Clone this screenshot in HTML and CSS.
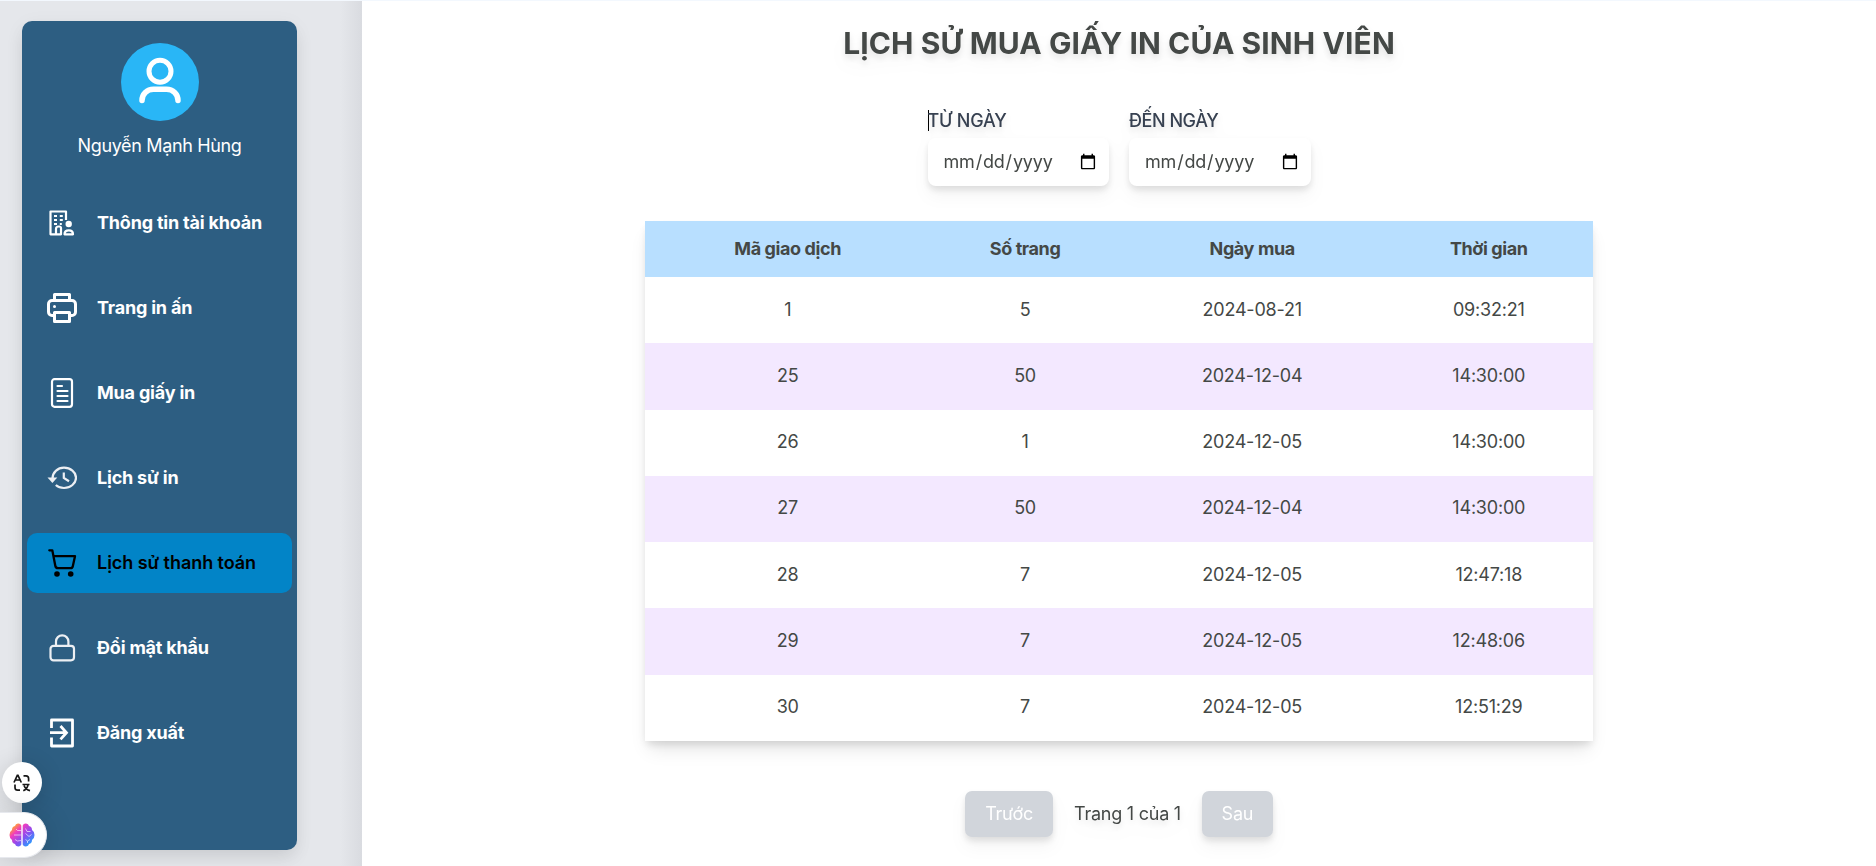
FILE: index.html
```html
<!DOCTYPE html>
<html lang="en">
<head>
<meta charset="utf-8">
<title>Lịch sử mua giấy in</title>
<link rel="stylesheet" href="styles.css">
</head>
<body>
<div class="page">
  <aside class="side">
    <div class="panel">
      <svg class="avatar" viewBox="0 0 78 78" fill="none">
        <circle cx="39" cy="39" r="39" fill="#29b6f6"/>
        <circle cx="39" cy="28.300" r="11" stroke="#fff" stroke-width="5"/>
        <path d="M21 57.500C21 51 26 46.300 32.500 46.300H45.500C52 46.300 57 51 57 57.500" stroke="#fff" stroke-width="5.500" stroke-linecap="round"/>
      </svg>
      <p class="name">Nguyễn Mạnh Hùng</p>
      <nav class="menu">
        <a class="item">
          <svg class="icon" viewBox="0 0 30 30" fill="none" stroke="#fff" stroke-width="2.200" stroke-linejoin="round">
            <path d="M14 26.300H3.500V3.500H19V12M11 26.300H14V20a1.500 1.500 0 0 0-1.500-1.500h-1A2.500 2.500 0 0 0 9 21v5.300"/>
            <path d="M7 8h3M12.800 8h3M7 12h3M12.800 12h3M7 16h3M12.800 16h2"/>
            <circle cx="21.700" cy="16" r="3.200" fill="#fff" stroke="none"/>
            <path d="M17.500 26.300h8.500c0-2.800-1.500-4-4.200-4s-4.300 1.200-4.300 4z"/>
          </svg>
          <span>Thông tin tài khoản</span>
        </a>
        <a class="item">
          <svg class="icon" viewBox="0 0 30 30" fill="none" stroke="#fff" stroke-width="3" stroke-linejoin="round">
            <path d="M7.500 7V1.500H22.500V7M7.500 22.500H5a3.500 3.500 0 0 1-3.500-3.500V11A3.500 3.500 0 0 1 5 7.500H25a3.500 3.500 0 0 1 3.500 3.500V19a3.500 3.500 0 0 1-3.500 3.500H22.500"/>
            <path d="M7.500 19.500H22.500V28.500H7.500z"/>
            <circle cx="7.500" cy="13.500" r="1.500" fill="#fff" stroke="none"/>
          </svg>
          <span>Trang in ấn</span>
        </a>
        <a class="item">
          <svg class="icon" viewBox="0 0 30 30" fill="none" stroke="#fff" stroke-width="2.200" stroke-linecap="round">
            <rect x="5" y="1.200" width="20" height="27.600" rx="2.500"/>
            <path d="M10.500 8H15M10.500 13H20.500M10.500 18H20.500M10.500 23H20.500"/>
          </svg>
          <span>Mua giấy in</span>
        </a>
        <a class="item">
          <svg class="icon" viewBox="0 0 30 30" fill="none" stroke="#eceff3" stroke-width="2.200">
            <path d="M5.500 15.500C5.500 9.500 10.500 4.700 17 4.700S29 9.200 29 14.800 23.500 25 17 25c-3.300 0-6.200-1.100-8.200-3"/>
            <path d="M.5 14.600H10.300L5.400 20z" fill="#eceff3" stroke="none"/>
            <path d="M16.800 9.500V15L22 18.300"/>
          </svg>
          <span>Lịch sử in</span>
        </a>
        <a class="item active">
          <svg class="icon" viewBox="0 0 30 30" fill="none" stroke="#000" stroke-width="2.300" stroke-linecap="round" stroke-linejoin="round">
            <path d="M2.300 2.300H5.300L8.300 17.800Q8.700 20.200 11 20.200H23.500Q25.400 20.200 25.800 18.200L28 8.200H6.600"/>
            <circle cx="10" cy="26" r="2.800" fill="#000" stroke="none"/>
            <circle cx="23.700" cy="26" r="2.800" fill="#000" stroke="none"/>
          </svg>
          <span>Lịch sử thanh toán</span>
        </a>
        <a class="item">
          <svg class="icon" viewBox="0 0 30 30" fill="none" stroke="#eceff3" stroke-width="2.200">
            <rect x="3.500" y="12.800" width="23.500" height="14.500" rx="3"/>
            <path d="M9 12.800V8.500A6.200 6.200 0 0 1 21.400 8.500V12.800"/>
          </svg>
          <span>Đổi mật khẩu</span>
        </a>
        <a class="item">
          <svg class="icon" viewBox="0 0 30 30" fill="none" stroke="#fff" stroke-width="2.800">
            <path d="M4.500 10V2H25.500V28H4.500V19.500" stroke-linejoin="round"/>
            <path d="M3 14.700H19.500M13.500 8L19.500 14.700L13.500 21.400"/>
          </svg>
          <span>Đăng xuất</span>
        </a>
      </nav>
    </div>
  </aside>
  <main class="main">
    <h1 class="title">LỊCH SỬ MUA GIẤY IN CỦA SINH VIÊN</h1>
    <div class="filters">
      <div class="field">
        <label class="label caret" for="from">TỪ NGÀY</label>
        <input class="date" id="from" type="date">
      </div>
      <div class="field">
        <label class="label" for="to">ĐẾN NGÀY</label>
        <input class="date" id="to" type="date">
      </div>
    </div>
    <table class="table">
      <colgroup><col class="c1"><col class="c2"><col class="c3"><col class="c4"></colgroup>
      <thead><tr><th>Mã giao dịch</th><th>Số trang</th><th>Ngày mua</th><th>Thời gian</th></tr></thead>
      <tbody>
        <tr><td>1</td><td>5</td><td>2024-08-21</td><td>09:32:21</td></tr>
        <tr><td>25</td><td>50</td><td>2024-12-04</td><td>14:30:00</td></tr>
        <tr><td>26</td><td>1</td><td>2024-12-05</td><td>14:30:00</td></tr>
        <tr><td>27</td><td>50</td><td>2024-12-04</td><td>14:30:00</td></tr>
        <tr><td>28</td><td>7</td><td>2024-12-05</td><td>12:47:18</td></tr>
        <tr><td>29</td><td>7</td><td>2024-12-05</td><td>12:48:06</td></tr>
        <tr><td>30</td><td>7</td><td>2024-12-05</td><td>12:51:29</td></tr>
      </tbody>
    </table>
    <div class="pager">
      <button class="btn prev" disabled>Trước</button>
      <span class="count">Trang 1 của 1</span>
      <button class="btn next" disabled>Sau</button>
    </div>
  </main>
</div>
<div class="float translate">
  <svg width="18" height="18" viewBox="0 0 18 18" fill="none" stroke="#161616" stroke-width="1.700">
    <path d="M1 8.500L4.300 1.300H5L8.300 8.500M2.500 6H7"/>
    <path d="M10.500 1.800H13Q15.600 1.800 15.600 4.500V7.500"/>
    <path d="M2 10.500V13.500Q2 16.200 4.700 16.200H7"/>
    <path d="M9.500 10.500H16.500M10.300 16.700C13 15.500 14.500 13.500 15 10.800M11 11.500C12 14 14 16 17 16.700"/>
  </svg>
</div>
<div class="float assistant">
  <svg width="26" height="24" viewBox="0 0 26 24">
    <defs><linearGradient id="g" x1="0" y1="0" x2="1" y2="1">
      <stop offset="0" stop-color="#ffa52c"/><stop offset=".15" stop-color="#ff9a3c"/><stop offset=".32" stop-color="#f03cc0"/><stop offset=".58" stop-color="#8a4df0"/><stop offset=".9" stop-color="#20a5ff"/>
    </linearGradient></defs>
    <path fill="url(#g)" d="M12.300 2.500Q11.500.3 9 .5 6.500.8 6 3 3 3.500 3 7 .5 8.500.5 12T3 17Q3 20.500 6 21 6.500 23.300 9 23.500 11.500 23.700 12.300 21.500zM13.700 2.500Q14.500.3 17 .5 19.500.8 20 3 23 3.500 23 7 25.500 8.500 25.500 12T23 17Q23 20.500 20 21 19.500 23.300 17 23.500 14.500 23.700 13.700 21.500z"/>
    <path stroke="#fff" stroke-opacity=".6" fill="none" stroke-width="1" d="M12.300 7.500H8.500L7 6M5 12H12.300M6 16.500Q8 19 12 17.500M16.500 5.500L18 8.500H21.500M16.500 10.500L20 13.500L22.500 11.500M16.500 16.500L18.500 18L21 16.500M18.500 18V20"/>
  </svg>
</div>
</body>
</html>
```
FILE: styles.css
```css
* { box-sizing: border-box; margin: 0; }
body {
  height: 866px;
  overflow: hidden;
  background: #fff;
  border-top: 1px solid #f3f8fe;
  color: #444846;
  font: 18px/27px Inter, "Noto Sans", sans-serif;
}
.page { display: flex; height: 865px; }

.side {
  flex: none;
  width: 362px;
  padding: 20px 65px 15px 22px;
  background: linear-gradient(90deg, #e5e7eb 94%, #d9dbe0);
}
.panel {
  height: 829px;
  padding: 22px 5px 0;
  border-radius: 10px;
  background: #2d5e82;
  box-shadow: 0 10px 18px -2px rgba(0, 0, 0, .08), 0 4px 20px rgba(0, 0, 0, .05);
  display: flex;
  flex-direction: column;
  align-items: center;
  color: #fff;
}
.avatar { width: 78px; height: 78px; flex: none; }
.name { margin-top: 11px; letter-spacing: -.35px; }
.menu { width: 100%; margin-top: 34px; display: flex; flex-direction: column; gap: 25px; }
.item {
  height: 60px;
  padding-left: 20px;
  display: flex;
  align-items: center;
  gap: 20px;
  border-radius: 10px;
  font-weight: 700;
  letter-spacing: -.2px;
}
.item span { padding-bottom: 2px; }
.item.active { background: #0284c7; color: #000; font-weight: 600; letter-spacing: -.05px; }
.icon { width: 30px; height: 30px; flex: none; }

.main {
  flex: 1;
  padding-top: 22px;
  display: flex;
  flex-direction: column;
  align-items: center;
}
.title, .filters, .pager {
  filter: drop-shadow(0 10px 8px rgba(0, 0, 0, .04)) drop-shadow(0 4px 3px rgba(0, 0, 0, .1));
}
.title { font-size: 30px; line-height: 40px; font-weight: 700; letter-spacing: .1px; white-space: nowrap; }
.filters { margin-top: 44px; display: flex; gap: 20px; }
.field { display: flex; flex-direction: column; gap: 4px; }
.label { color: #374151; line-height: 27px; font-weight: 500; letter-spacing: -.45px; }
.caret { letter-spacing: -.2px; }
.caret::before {
  content: "";
  display: inline-block;
  width: 1px;
  height: 21px;
  margin-right: -1px;
  vertical-align: -4px;
  background: #000;
}
.date {
  width: 181.500px;
  height: 48px;
  padding: 0 10px 1px 15px;
  border: 0;
  border-radius: 8px;
  background: #fff;
  color: #444846;
  font: inherit;
  letter-spacing: -.2px;
}
.table {
  width: 948px;
  margin-top: 35px;
  border-collapse: collapse;
  table-layout: fixed;
  text-align: center;
  background: #fff;
  box-shadow: 0 12px 18px -4px rgba(0, 0, 0, .1), 0 5px 8px -2px rgba(0, 0, 0, .12);
}
.c1 { width: 285.400px; }
.c2 { width: 189.400px; }
.c3 { width: 264.800px; }
.c4 { width: 208.400px; }
.table th { height: 56px; padding: 0 0 2px; background: #b8dfff; font-weight: 700; letter-spacing: -.4px; }
.table td { height: 66.290px; padding: 0 0 2px; letter-spacing: -.2px; }
.table tbody tr:nth-child(even) { background: #f3e8ff; }
.pager { margin-top: 50px; display: flex; align-items: center; gap: 21px; }
.count { letter-spacing: -.25px; }
.btn {
  height: 46px;
  padding: 0;
  border: 0;
  border-radius: 7px;
  background: #d1d5db;
  color: #fff;
  font: inherit;
  letter-spacing: -.2px;
}
.prev { width: 88px; }
.next { width: 71px; }

.float { position: absolute; background: #fff; display: flex; align-items: center; }
.translate {
  left: 2px;
  top: 762px;
  width: 40px;
  height: 41px;
  justify-content: center;
  border-radius: 50%;
  box-shadow: 0 4px 24px rgba(0, 0, 0, .16);
}
.assistant {
  left: 0;
  top: 812px;
  width: 47px;
  height: 46px;
  padding-left: 9px;
  border-radius: 0 23px 23px 0;
  border: 1px solid #e7e9ee;
  border-left: 0;
  box-shadow: 0 4px 30px rgba(0, 0, 0, .16);
}
```
